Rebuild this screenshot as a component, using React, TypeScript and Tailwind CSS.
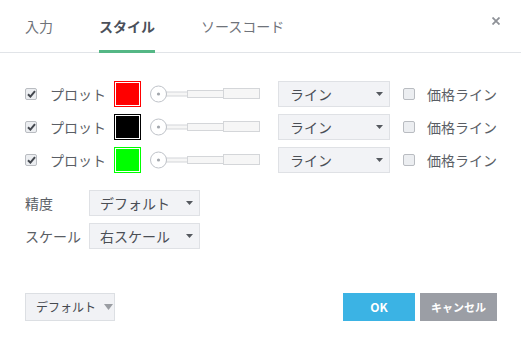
import { useState } from 'react';

const font = { fontFamily: '"Noto Sans CJK JP", "Noto Sans", sans-serif' };

function Check({ checked }: { checked: boolean }) {
  return (
    <span className="flex h-[12px] w-[12px] items-center justify-center rounded-[2px] border border-[#b9bcc1] bg-[#eceef1]">
      {checked && (
        <svg width="9" height="8" viewBox="0 0 9 8">
          <path d="M1 4.2 L3.4 6.6 L8 1.2" fill="none" stroke="#44484f" strokeWidth="2" />
        </svg>
      )}
    </span>
  );
}

function Caret() {
  return (
    <svg width="7" height="4" viewBox="0 0 7 4" className="shrink-0">
      <path d="M0 0 H7 L3.5 4 Z" fill="#55595f" />
    </svg>
  );
}

function Slider() {
  return (
    <svg width="110" height="18" viewBox="0 0 110 18" className="shrink-0">
      <rect x="16.5" y="7" width="21" height="4" fill="#f6f6f6" stroke="#d4d6d9" />
      <rect x="37.5" y="5.5" width="36" height="7" fill="#f6f6f6" stroke="#d4d6d9" />
      <rect x="73.5" y="3.5" width="36" height="10" fill="#f6f6f6" stroke="#d4d6d9" />
      <circle cx="8.5" cy="9" r="8" fill="#ffffff" stroke="#bfc3c9" />
      <circle cx="8.5" cy="9" r="1.6" fill="#a3a7ad" />
    </svg>
  );
}

function PlotRow({ color }: { color: string }) {
  return (
    <div className="flex h-[26px] items-center">
      <div className="flex w-[25px] justify-start">
        <Check checked />
      </div>
      <span className="w-[64px] text-[14px] text-[#5a5e65]">プロット</span>
      <span className="flex h-[26px] w-[27px] items-center justify-center border" style={{ borderColor: color }}>
        <span className="h-[22px] w-[23px]" style={{ background: color }} />
      </span>
      <div className="ml-[9px]">
        <Slider />
      </div>
      <div className="ml-[18px] flex h-[26px] w-[112px] items-center justify-between border border-[#dfe1e5] bg-[#f2f3f6] pl-[11px] pr-[6px] text-[14px] text-[#4a4e55]">
        <span>ライン</span>
        <Caret />
      </div>
      <div className="ml-[13px]">
        <Check checked={false} />
      </div>
      <span className="ml-[12px] text-[14px] text-[#5a5e65]">価格ライン</span>
    </div>
  );
}

export default function App() {
  const [tab] = useState(1);
  const tabs = ['入力', 'スタイル', 'ソースコード'];

  return (
    <div className="relative h-[343px] w-[521px] overflow-hidden bg-white" style={font}>
      {/* header */}
      <div className="flex h-[53px] items-stretch border-b border-[#e1e4e8] pl-[25px] pr-[21px]">
        <div className="flex gap-[46px]">
          {tabs.map((t, i) => (
            <div
              key={t}
              className={
                i === tab
                  ? '-mb-px flex items-center border-b-[3px] border-[#54b785] pt-[3px] text-[14px] font-bold text-[#4b505a]'
                  : '-mb-px flex items-center border-b-[3px] border-transparent pt-[3px] text-[14px] text-[#6f737a]'
              }
            >
              {t}
            </div>
          ))}
        </div>
        <div className="ml-auto flex items-start pt-[17px]">
          <svg width="8" height="8" viewBox="0 0 8 8">
            <path d="M0.5 0.5 L7.5 7.5 M7.5 0.5 L0.5 7.5" stroke="#8e9197" strokeWidth="1.8" />
          </svg>
        </div>
      </div>

      {/* plots */}
      <div className="flex flex-col gap-[7px] pl-[25px] pt-[28px]">
        <PlotRow color="#ff0000" />
        <PlotRow color="#000000" />
        <PlotRow color="#00ff00" />
      </div>

      {/* precision / scale */}
      <div className="flex flex-col gap-[7px] pl-[25px] pt-[17px]">
        <div className="flex h-[26px] items-center">
          <span className="w-[64px] text-[14px] text-[#5a5e65]">精度</span>
          <div className="flex h-[26px] w-[111px] items-center justify-between border border-[#dfe1e5] bg-[#f2f3f6] pl-[10px] pr-[6px] text-[14px] text-[#4a4e55]">
            <span>デフォルト</span>
            <Caret />
          </div>
        </div>
        <div className="flex h-[26px] items-center">
          <span className="w-[64px] text-[14px] text-[#5a5e65]">スケール</span>
          <div className="flex h-[26px] w-[111px] items-center justify-between border border-[#dfe1e5] bg-[#f2f3f6] pl-[10px] pr-[6px] text-[14px] text-[#4a4e55]">
            <span>右スケール</span>
            <Caret />
          </div>
        </div>
      </div>

      {/* footer */}
      <div className="flex items-center pl-[25px] pr-[24px] pt-[44px]">
        <div className="flex h-[28px] w-[90px] items-center gap-[8px] border border-[#dcdfe3] bg-[#f1f2f5] pl-[10px] text-[12px] text-[#45494f]">
          <span>デフォルト</span>
          <svg width="9" height="6" viewBox="0 0 9 6">
            <path d="M0 0 H9 L4.5 6 Z" fill="#9a9da2" />
          </svg>
        </div>
        <div className="ml-auto flex gap-[5px]">
          <button className="flex h-[28px] w-[72px] items-center justify-center bg-[#3bb3e4] text-[12px] font-bold text-white">
            OK
          </button>
          <button className="flex h-[28px] w-[77px] items-center justify-center bg-[#9b9ea5] text-[11px] font-bold text-white">
            キャンセル
          </button>
        </div>
      </div>
    </div>
  );
}
